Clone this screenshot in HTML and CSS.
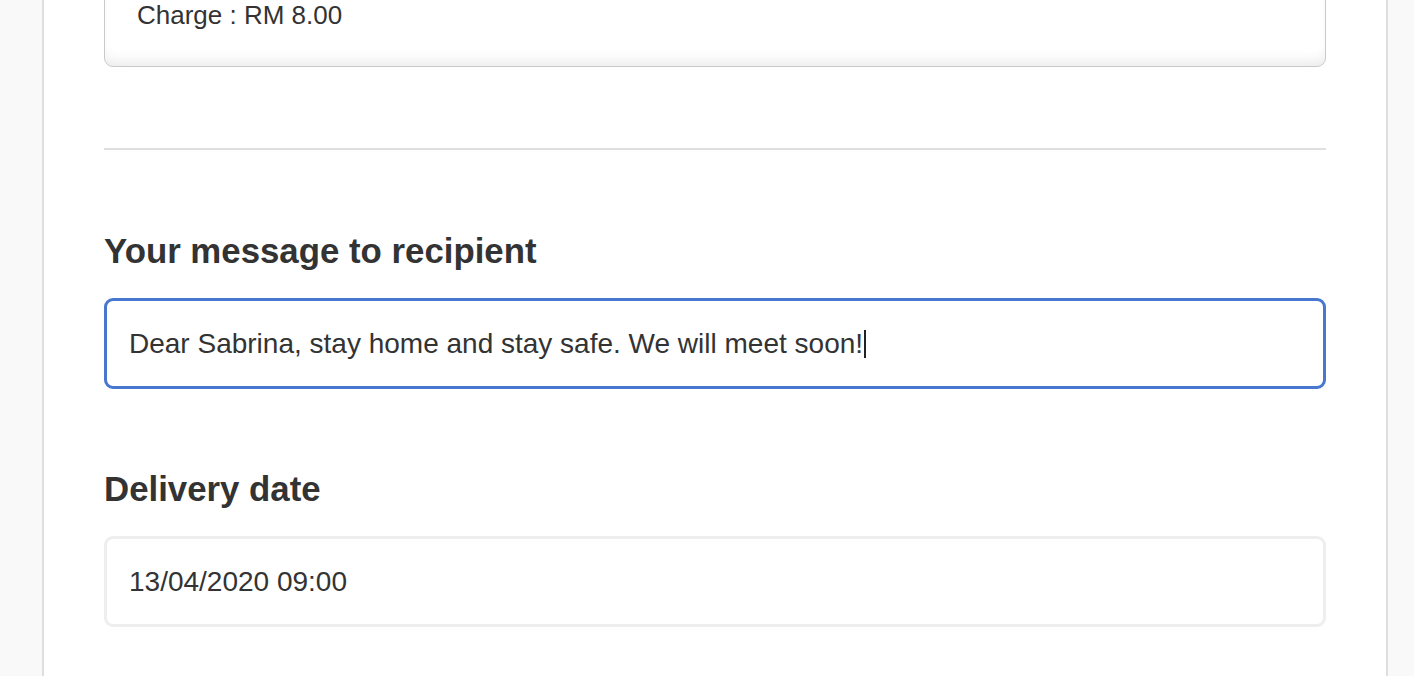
FILE: index.html
```html
<!DOCTYPE html>
<html lang="en">
<head>
  <meta charset="UTF-8">
  <meta name="viewport" content="width=device-width, initial-scale=1.0">
  <title>Send a gift</title>
  <link rel="stylesheet" href="styles.css">
</head>
<body>
  <!-- Основной блок страницы -->
  <main class="page">
    <!-- Стоимость доставки -->
    <div class="charge-box">
      Charge : RM 8.00
    </div>

    <hr class="divider">

    <!-- Сообщение получателю -->
    <div class="field">
      <h2 class="field-title">Your message to recipient</h2>
      <div class="input input-focus">Dear Sabrina, stay home and stay safe. We will meet soon!<span class="caret"></span></div>
    </div>

    <!-- Дата доставки -->
    <div class="field">
      <h2 class="field-title">Delivery date</h2>
      <div class="input">13/04/2020 09:00</div>
    </div>
  </main>
</body>
</html>
```

FILE: styles.css
```css
/* Общие стили */
html, body {
  height: 100%;
  overflow: hidden;
}

body {
  font-family: "Liberation Sans", Arial, Helvetica, sans-serif;
  background-color: #f9f9f9;
  color: #333;
  margin: 0;
  padding: 0;
}

/* Белая колонка */
.page {
  margin: -21px 26px 0 42px;
  min-height: calc(100vh + 21px);
  box-sizing: border-box;
  background: #fff;
  border-left: 2px solid #dedede;
  border-right: 2px solid #dedede;
  padding: 0 60px;
}

/* Блок стоимости */
.charge-box {
  padding: 20px 32px 36px;
  font-size: 26px;
  line-height: 30px;
  border: 1px solid #c9c9c9;
  border-radius: 9px;
  box-shadow: inset 0 -10px 14px -6px rgba(0, 0, 0, 0.09);
}

.divider {
  border: none;
  border-top: 2px solid #dfdfdf;
  margin: 81px 0 81px;
}

/* Поля формы */
.field {
  margin-bottom: 80px;
}

.field-title {
  margin: 0 0 27px;
  font-size: 34.8px;
  line-height: 40px;
  font-weight: bold;
  color: #333;
}

.input {
  height: 85px;
  padding: 0 22px;
  display: flex;
  align-items: center;
  font-size: 28px;
  border: 3px solid #eeeeee;
  border-radius: 9px;
  color: #333;
}

.input-focus {
  border-color: #4777cf;
}

.caret {
  display: inline-block;
  width: 2px;
  height: 28px;
  background: #222;
  margin-left: 1px;
}
```
